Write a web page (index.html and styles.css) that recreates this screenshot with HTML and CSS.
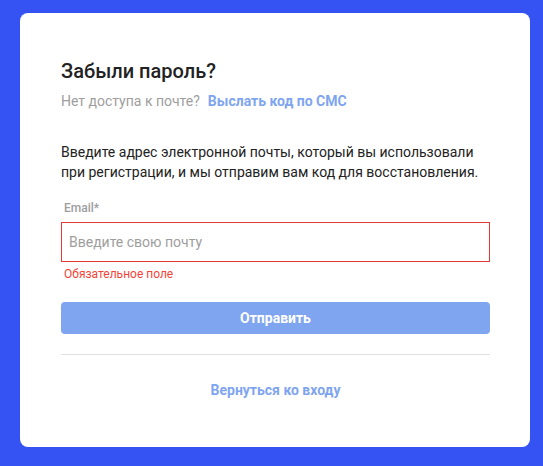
FILE: index.html
```html
<!DOCTYPE html>
<html lang="ru">

<head>
    <meta charset="UTF-8">
    <meta name="viewport" content="width=device-width, initial-scale=1.0">
    <title>Забыли пароль?</title>
    <link rel="stylesheet" href="styles.css">
</head>

<body>
    <div class="card">
        <h1 class="title">Забыли пароль?</h1>
        <div class="sub">
            <span>Нет доступа к почте?</span>
            <a href="#" class="link">Выслать код по СМС</a>
        </div>

        <p class="text">Введите адрес электронной почты, который вы использовали при регистрации, и мы отправим вам код для восстановления.</p>

        <form class="form">
            <label class="label" for="email">Email*</label>
            <input type="email" id="email" class="input" placeholder="Введите свою почту" autofocus>
            <span class="error">Обязательное поле</span>
            <button type="button" class="btn">Отправить</button>
        </form>

        <div class="divider"></div>

        <div class="back">
            <a href="#" class="link">Вернуться ко входу</a>
        </div>
    </div>
</body>

</html>
```

FILE: styles.css
```css
body {
    margin: 0;
    background-color: #3553f2;
    font-family: Roboto, "Noto Sans", Arial, sans-serif;
    color: #212121;
    padding: 13px 13px 19px 20px;
}

.card {
    width: 510px;
    height: 434px;
    box-sizing: border-box;
    background: #fff;
    border-radius: 8px;
    padding: 46px 40px 0 41px;
}

.title {
    margin: 0;
    font-size: 20px;
    line-height: 24px;
    font-weight: 500;
    color: #222;
}

.sub {
    margin-top: 9px;
    font-size: 14px;
    line-height: 18px;
    color: #9e9e9e;
    display: flex;
    gap: 8px;
}

.link {
    color: #7fa5f0;
    font-weight: 700;
    text-decoration: none;
}

.text {
    margin: 32px 0 0;
    font-size: 14px;
    line-height: 20px;
    color: #222;
}

.form {
    display: flex;
    flex-direction: column;
    margin-top: 18px;
}

.label {
    padding-left: 3px;
    font-size: 12px;
    line-height: 16px;
    font-weight: 500;
    color: #9e9e9e;
}

.input {
    margin-top: 6px;
    height: 40px;
    box-sizing: border-box;
    border: 1px solid #e53935;
    padding: 0 7px;
    font-family: inherit;
    font-size: 14px;
    color: #222;
    caret-color: #e53935;
    outline: none;
}

.input::placeholder {
    color: #9e9e9e;
}

.error {
    margin-top: 4px;
    padding-left: 3px;
    font-size: 12px;
    line-height: 16px;
    color: #f44336;
}

.btn {
    margin-top: 20px;
    height: 32px;
    border: none;
    border-radius: 4px;
    background-color: #7fa5f0;
    color: #fff;
    font-family: inherit;
    font-size: 14px;
    font-weight: 700;
    cursor: pointer;
}

.divider {
    margin-top: 20px;
    height: 1px;
    background: #e0e0e0;
}

.back {
    margin-top: 26px;
    text-align: center;
    font-size: 14px;
    line-height: 18px;
}
```
